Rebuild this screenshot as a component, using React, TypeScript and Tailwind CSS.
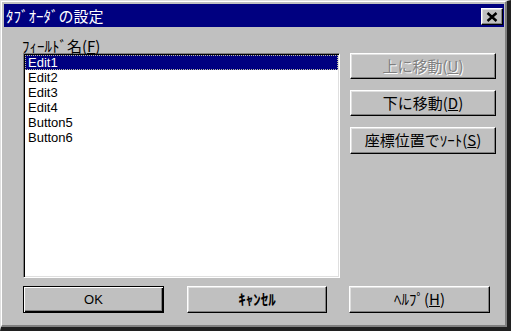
import React from 'react';

const font = "font-['Liberation_Sans','Noto_Sans_CJK_JP',sans-serif]";
const jp = "font-['Noto_Sans_CJK_JP',sans-serif] text-[15px]";

function Btn({
  children,
  className = '',
  isDefault = false,
}: {
  children: React.ReactNode;
  className?: string;
  isDefault?: boolean;
}) {
  const frame = isDefault
    ? 'border border-black shadow-[inset_1px_1px_#ffffff,inset_-1px_-1px_#000000,inset_-2px_-2px_#808080]'
    : 'border border-t-white border-l-white border-r-black border-b-black shadow-[inset_-1px_-1px_#808080,inset_1px_1px_#dfdfdf]';
  return (
    <div className={`flex items-center justify-center bg-[#c0c0c0] text-[13px] text-black ${frame} ${className}`}>
      {children}
    </div>
  );
}

const items = ['Edit1', 'Edit2', 'Edit3', 'Edit4', 'Button5', 'Button6'];

export default function App() {
  return (
    <div className={`w-[511px] h-[331px] bg-[#c0c0c0] ${font} border-t border-l border-[#dfdfdf] border-r-[4px] border-b-[4px] border-r-[#202020] border-b-[#202020]`}>
      <div className="h-full border-t border-l border-t-white border-l-white border-r-2 border-b-2 border-r-[#808080] border-b-[#808080] pl-[2px] pt-[2px] pr-px">
        {/* title bar */}
        <div className="h-[23px] bg-[#000080] flex items-start justify-between">
          <span className={`text-white leading-[23px] pl-[2px] ${jp}`}>ﾀﾌﾞｵｰﾀﾞの設定</span>
          <div className="mt-[4px] mr-px w-[22px] h-[17px] flex items-center justify-center bg-[#c0c0c0] border border-t-white border-l-white border-r-black border-b-black shadow-[inset_-1px_-1px_#808080,inset_1px_1px_#dfdfdf]">
            <svg width="12" height="10" viewBox="0 0 12 10">
              <path d="M1.5 1 L10.5 9 M10.5 1 L1.5 9" stroke="#000" strokeWidth="2.4" />
            </svg>
          </div>
        </div>

        <div className="flex pl-[19px] pt-[11px]">
          <div className="w-[317px]">
            <div className={`h-[15px] leading-[15px] text-black -ml-px ${jp}`}>
              ﾌｨｰﾙﾄﾞ名(<span className="underline">F</span>)
            </div>
            <div className="h-[225px] bg-white border border-t-[#808080] border-l-[#808080] border-r-white border-b-white shadow-[inset_1px_1px_#000000,inset_-1px_-1px_#dfdfdf] p-px">
              {items.map((it, i) => (
                <div
                  key={it}
                  className={
                    i === 0
                      ? 'h-[15px] leading-[13px] text-[13px] bg-[#000080] text-white pl-[2px] border border-dotted border-[#c0c0a0]'
                      : 'h-[15px] leading-[15px] text-[13px] text-black pl-[3px]'
                  }
                >
                  {it}
                </div>
              ))}
            </div>
          </div>

          <div className="ml-[10px] mt-[15px] w-[146px] flex flex-col gap-[11px]">
            <Btn className="h-[26px]">
              <span className={`text-[#808080] [text-shadow:1px_1px_0_#ffffff] ${jp}`}>
                上に移動(<span className="underline">U</span>)
              </span>
            </Btn>
            <Btn className="h-[26px]">
              <span className={jp}>
                下に移動(<span className="underline">D</span>)
              </span>
            </Btn>
            <Btn className="h-[27px]">
              <span className={jp}>
                座標位置でｿｰﾄ(<span className="underline">S</span>)
              </span>
            </Btn>
          </div>
        </div>

        <div className="flex pl-[19px] mt-[8px]">
          <Btn isDefault className="w-[141px] h-[27px]">
            OK
          </Btn>
          <Btn className="ml-[23px] w-[140px] h-[27px]">
            <span className={`${jp} font-bold`}>ｷｬﾝｾﾙ</span>
          </Btn>
          <Btn className="ml-[22px] w-[141px] h-[27px]">
            <span className={jp}>
              ﾍﾙﾌﾟ(<span className="underline">H</span>)
            </span>
          </Btn>
        </div>
      </div>
    </div>
  );
}
